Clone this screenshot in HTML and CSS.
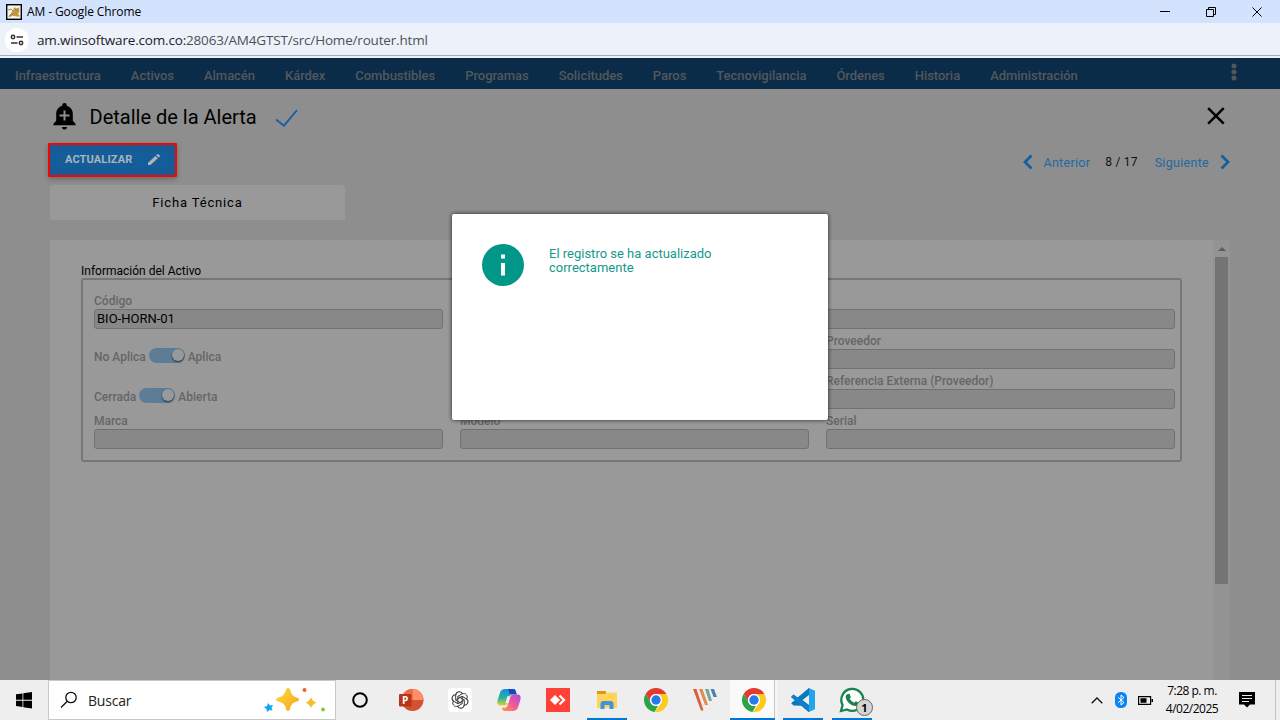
FILE: index.html
```html
<!DOCTYPE html>
<html lang="es">
<head>
<meta charset="utf-8">
<title>AM - Google Chrome</title>
<link rel="stylesheet" href="styles.css">
</head>
<body>
<header class="titlebar">
  <svg class="favicon" width="16" height="16" viewBox="0 0 16 16"><rect x=".7" y=".7" width="14.6" height="14.6" fill="#f4f4f0" stroke="#000" stroke-width="1.4"/><path d="M2 13l2.500-2.500L7 6l1.500-3 1.500 1.500L13 3.500l.5 4-1.500 2 2 3h-4l-2-1.500-3 1.500z" fill="#c9963c"/><path d="M2 6l3-1 2 2M3 12l3-2 3 2M9 5l3 1" fill="none" stroke="#8d8068" stroke-width=".9"/></svg>
  <span class="window-title">AM - Google Chrome</span>
  <svg class="window-controls" width="104" height="16" viewBox="0 0 104 16" fill="none" stroke="#000" stroke-width="1"><path d="M0 7.500h10M46.500 5.500h7v7h-7zM48.500 5.500v-2h7v7h-2M92.500 3.500l9 9M101.500 3.500l-9 9"/></svg>
</header>
<div class="urlbar">
  <span class="site-info"><svg width="24" height="24" viewBox="0 0 24 24" fill="none" stroke="#333" stroke-width="1.5"><circle cx="8" cy="9" r="1.700"/><path d="M11.500 9h6.500M6 15h6.500"/><circle cx="16" cy="15" r="1.700"/></svg></span>
  <span class="url">am.winsoftware.com.co:<span class="url-path">28063/AM4GTST/src/Home/router.html</span></span>
</div>
<nav class="menu">
  <span>Infraestructura</span><span>Activos</span><span>Almacén</span><span>Kárdex</span><span>Combustibles</span><span>Programas</span><span>Solicitudes</span><span>Paros</span><span>Tecnovigilancia</span><span>Órdenes</span><span>Historia</span><span>Administración</span>
  <svg class="more" width="6" height="18" viewBox="0 0 6 18" fill="#53585c"><circle cx="3" cy="3" r="2.500"/><circle cx="3" cy="9" r="2.500"/><circle cx="3" cy="15" r="2.500"/></svg>
</nav>
<main class="page">
  <div class="heading">
    <svg class="bell" width="23" height="27" viewBox="0 0 23 27"><path d="M11.500 0c1.300 0 2.200.9 2.200 2v.8c3.700 1 6.100 4.100 6.100 8v7l2.700 2.900v1.500H.5v-1.500l2.700-2.900v-7c0-3.900 2.400-7 6.100-8V2c0-1.100.9-2 2.200-2zM9 23.900h5c0 1.500-1 2.600-2.500 2.600S9 25.400 9 23.900z" fill="#000"/><path d="M11.500 7.500v10M6.500 12.500h10" stroke="#8e8e8e" stroke-width="2"/></svg>
    <h1>Detalle de la Alerta</h1>
    <svg class="check" width="23" height="18" viewBox="0 0 23 18"><path d="M1 10.500l8 6.200L22 1.200" fill="none" stroke="#16609f" stroke-width="1.800"/></svg>
    <svg class="close" width="18" height="18" viewBox="0 0 18 18"><path d="M1.200 1.200l15.500 15.500M16.700 1.200L1.200 16.700" stroke="#000" stroke-width="2.500"/></svg>
  </div>
  <div class="actions">
    <button class="update">ACTUALIZAR<svg width="12" height="11" viewBox="3 3 18 18" preserveAspectRatio="none" fill="#a9b4bf"><path d="M3 17.250V21h3.750L17.810 9.940l-3.750-3.750L3 17.250zM20.710 7.040a1 1 0 0 0 0-1.410l-2.340-2.340a1 1 0 0 0-1.410 0l-1.830 1.830 3.750 3.750 1.830-1.830z"/></svg></button>
    <div class="pager">
      <svg width="10" height="16" viewBox="0 0 10 16"><path d="M8.500 1.500L2 8l6.500 6.500" fill="none" stroke="#155f9f" stroke-width="2.800"/></svg>
      <span class="prev">Anterior</span><span class="count">8 / 17</span><span class="next">Siguiente</span>
      <svg width="10" height="16" viewBox="0 0 10 16"><path d="M1.500 1.500L8 8l-6.500 6.500" fill="none" stroke="#155f9f" stroke-width="2.800"/></svg>
    </div>
  </div>
  <div class="tab">Ficha Técnica</div>
  <div class="sheet">
    <section class="content">
      <h2>Información del Activo</h2>
      <div class="fields">
        <div class="column">
          <div class="field"><label>Código</label><div class="input">BIO-HORN-01</div></div>
          <div class="toggle"><span>No Aplica</span><i class="switch"></i><span>Aplica</span></div>
          <div class="toggle"><span>Cerrada</span><i class="switch"></i><span>Abierta</span></div>
          <div class="field"><label>Marca</label><div class="input"></div></div>
        </div>
        <div class="column column-end">
          <div class="field"><label>Modelo</label><div class="input"></div></div>
        </div>
        <div class="column">
          <div class="field"><label></label><div class="input"></div></div>
          <div class="field"><label>Proveedor</label><div class="input"></div></div>
          <div class="field"><label>Referencia Externa (Proveedor)</label><div class="input"></div></div>
          <div class="field"><label>Serial</label><div class="input"></div></div>
        </div>
      </div>
    </section>
    <div class="scrollbar"><i class="scroll-arrow"></i><i class="scroll-thumb"></i></div>
  </div>
</main>
<div class="modal">
  <svg width="42" height="42" viewBox="0 0 42 42"><circle cx="21" cy="21" r="21" fill="#009688"/><path d="M19 10.500h4v4h-4zM19 19h4v12.500h-4z" fill="#fff"/></svg>
  <p>El registro se ha actualizado correctamente</p>
</div>
<footer class="taskbar">
  <div class="start"><svg width="16" height="17" viewBox="0 0 16 17"><path d="M0 2.300L6.500 1.400v6.300H0zM7.300 1.300L16 0v7.700H7.300zM0 8.700h6.500V15L0 14.100zM7.300 8.700H16v7.800L7.300 15.200z"/></svg></div>
  <div class="search">
    <svg width="18" height="18" viewBox="0 0 18 18" fill="none" stroke="#111" stroke-width="1.300"><circle cx="11" cy="6.500" r="5.200"/><path d="M7.300 10.200L1 16.500"/></svg>
    <span>Buscar</span>
    <svg class="sparkles" width="64" height="28" viewBox="0 0 64 28"><defs><linearGradient id="gold" x2="1" y2="1"><stop stop-color="#ffd83d"/><stop offset="1" stop-color="#f2a91d"/></linearGradient></defs><path d="M25 2q2 0 2.500 3 1.200 5 5 6t3.500 2.500q0 1.500-3.500 2.500t-5 5q-.7 4-2.500 4t-2.500-4q-1.500-4-5.500-5t-4-2.500 4-2.500 5.500-6Q23 2 25 2z" fill="url(#gold)"/><path d="M48 11q1.500 4.500 5.500 5.500-4 1.500-5.500 5.500-1.500-4-5.500-5.500 4-1 5.500-5.500z" fill="#f9bd28"/><path d="M5 17l2 2.500 3-.5-1.500 3 1 2.500-3-.5L4 26l-.5-3L1 21l3-1z" fill="#10a5f5"/><circle cx="41.500" cy="4" r="2" fill="#f4602c"/><circle cx="60" cy="23.500" r="2" fill="#8cc647"/></svg>
  </div>
  <div class="apps">
    <div class="app cortana"><svg width="24" height="24" viewBox="0 0 24 24"><circle cx="12" cy="12" r="6.800" fill="none" stroke="#000" stroke-width="2"/></svg></div>
    <div class="app"><svg width="26" height="24" viewBox="0 0 26 24"><circle cx="14.500" cy="12" r="11" fill="#d35230"/><path d="M14.500 1a11 11 0 0 1 11 11h-11z" fill="#ff8f6b"/><path d="M14.500 1v11h-11a11 11 0 0 1 11-11z" fill="#ed6c47"/><rect x="1" y="6" width="12.500" height="12.500" rx="1" fill="#b7351c"/><text x="4" y="16" class="ppt-letter">P</text></svg></div>
    <div class="app"><svg width="24" height="24" viewBox="0 0 24 24"><rect width="24" height="24" rx="4" fill="#fff"/><g fill="none" stroke="#303030" stroke-width=".95"><path id="knot" d="M9.800 15V8.300l4-2.300c4-2 7 2.500 4.500 5.300"/><use href="#knot" transform="rotate(60 12 12)"/><use href="#knot" transform="rotate(120 12 12)"/><use href="#knot" transform="rotate(180 12 12)"/><use href="#knot" transform="rotate(240 12 12)"/><use href="#knot" transform="rotate(300 12 12)"/></g></svg></div>
    <div class="app"><svg width="24" height="24" viewBox="1 1 22 22"><defs><linearGradient id="cpa" x1="0" y1="0" x2="0" y2="1"><stop stop-color="#178ddd"/><stop offset=".55" stop-color="#27b69c"/><stop offset="1" stop-color="#e8cf2b"/></linearGradient><linearGradient id="cpb" x1="1" y1="0" x2="0" y2="1"><stop stop-color="#a54de4"/><stop offset=".5" stop-color="#f05a94"/><stop offset="1" stop-color="#ff9b48"/></linearGradient></defs><path d="M8 2h8c1.500 0 2 1 2.500 3h-3c-1.500 0-2 1-2.500 3l-2 6.500c-.8 2-1.500 2.500-3.500 2.500H4c-3 0-3-3-2.300-5.500l2-6C4.500 3 6 2 8 2z" fill="url(#cpa)"/><path d="M11 2h5c1.500 0 2 1 2.500 3l.8 2H13c-1-1-1-4-2-5z" fill="#1647bc"/><path d="M16 22H8c-1.500 0-2-1-2.500-3h3c1.500 0 2-1 2.500-3l2-6.500C13.800 7.500 14.500 7 16.500 7H20c3 0 3 3 2.300 5.500l-2 6C19.500 21 18 22 16 22z" fill="url(#cpb)"/><path d="M13.300 8.500h-2.800L8.700 15h2.700z" fill="#eee"/></svg></div>
    <div class="app"><svg width="24" height="24" viewBox="0 0 24 24"><path fill="#ff4137" d="M0 0h24v24H0z"/><path fill="#fff" d="M9 7l5 5-5 5-5-5z"/><path d="M13.500 7.500L18 12l-4.500 4.500" fill="none" stroke="#fff" stroke-width="2.200"/></svg></div>
    <div class="app running"><svg width="22" height="20" viewBox="0 0 22 20"><path d="M1 1h9v4H1z" fill="#dc9a0d"/><path d="M1 4h8l1.500-1.500H21V18H1z" fill="#ffd35c"/><path d="M4.500 19v-5q0-3 3-3h7q3 0 3 3v5h-4v-4h-5v4z" fill="#3d93dc"/></svg></div>
    <div class="app"><svg width="24" height="24" viewBox="0 0 24 24"><g id="chrome"><path d="M1.600 6A12 12 0 0 1 22.400 6H12a6 6 0 0 0-5.200 9z" fill="#e43b2e"/><path d="M1.600 6l5.200 9A6 6 0 0 0 12 18l2-.3L10.500 23.900A12 12 0 0 1 1.600 6z" fill="#27a549"/><path d="M22.400 6A12 12 0 0 1 11 24l6.200-9A6 6 0 0 0 12 6z" fill="#fdcb1d"/><circle cx="12" cy="12" r="6" fill="#fff"/><circle cx="12" cy="12" r="4.700" fill="#2979ed"/></g></svg></div>
    <div class="app"><svg width="24" height="24" viewBox="0 0 24 24"><path d="M0 1h3.500l7 21.500H8z" fill="#dc5c3f"/><path d="M6 1h3.500l5.500 16h-3z" fill="#e88a4c"/><path d="M12 1h3.500l3.500 12h-3z" fill="#72a896"/><path d="M17.500 1H21l3 8h-3.500z" fill="#4c80b6"/></svg></div>
    <div class="app running active"><svg width="24" height="24" viewBox="0 0 24 24"><use href="#chrome"/></svg></div>
    <div class="app running"><svg width="24" height="24" viewBox="0 0 24 24"><path d="M17.500 0L24 3v18l-6.500 3L0 9l2.500-2.500L18 18V6z" fill="#2489ca"/><path d="M17.500 0L24 3v18l-6.500 3z" fill="#23a5ec"/><path d="M18 6v12L2.500 17.500 0 15 18 0z" fill="#0879bd"/><path d="M18 7v10l-6.500-5z" fill="#eee"/><path d="M0 9l2.500-2.500L18 18v6z" fill="#1081c8"/><path d="M0 10.500l3.500 1.800L0 15z" fill="#eee"/><path d="M4.500 17l7-4 4 4-7 2z" fill="none"/></svg></div>
    <div class="app running whatsapp"><svg width="26" height="26" viewBox="0 0 26 26"><path d="M2 24l1.600-6A11 11 0 1 1 8 22.500z" fill="#fff" stroke="#168450" stroke-width="2.300"/><path d="M8.500 7l2-.3 1.400 3.500-1.200 1.500q1.500 3 4.500 4l1.500-1.500 3 1.500c.2 2.500-2 3.500-4 3.200-5-.8-9.500-6-9-9.500q.2-1.500 1.800-2.400z" fill="#168450"/></svg><b class="badge">1</b></div>
  </div>
  <div class="tray">
    <svg width="12" height="7" viewBox="0 0 12 7"><path d="M.7 6.300L6 1l5.300 5.300" fill="none" stroke="#111" stroke-width="1.300"/></svg>
    <svg class="bluetooth" width="12" height="16" viewBox="0 0 12 16"><rect width="12" height="16" rx="5.500" fill="#0a84f5"/><path d="M3 5.300l6 5.200-3 2.500V3l3 2.500-6 5.200" fill="none" stroke="#fff"/></svg>
    <svg class="battery" width="15" height="9" viewBox="0 0 15 9"><path d="M.6.600h12v7.800H.6z" fill="none" stroke="#000" stroke-width="1.200"/><path d="M2.500 2.300h6v4.400h-6zM13.500 3H15v3h-1.500z"/></svg>
    <div class="clock"><span class="time">7:28 p. m.</span><span class="date">4/02/2025</span></div>
    <svg class="notice" width="16" height="16" viewBox="0 0 16 16"><path d="M0 0h16v12.500h-5L8 15.500l-3-3H0z"/><path d="M3 3.500h10M3 6.500h10M3 9.500h7" stroke="#eee"/></svg>
    <i class="desktop-edge"></i>
  </div>
</footer>
</body>
</html>
```
FILE: styles.css
```css
* { box-sizing: border-box; }
body { margin: 0; width: 1280px; height: 720px; overflow: hidden; display: flex; flex-direction: column; position: relative; background: #8e8e8e; font-family: Roboto, sans-serif; color: #000; }
svg { display: block; flex: none; }
.titlebar { height: 23px; flex: none; display: flex; align-items: center; padding-left: 6px; background: #d3e3fd; }
.window-title { margin-left: 5px; font: 12px/16px "Open Sans", sans-serif; letter-spacing: -.1px; }
.window-controls { margin-left: auto; margin-right: 16px; }
.urlbar { height: 35px; flex: none; display: flex; align-items: center; padding: 0 0 1px 5px; background: linear-gradient(#edf1fa 32px, #a6abb0 32px 33px, #eef2f8 33px); }
.site-info { width: 24px; height: 24px; border-radius: 50%; background: #fff; }
.url { margin-left: 8px; font: 13.500px/20px "Open Sans", sans-serif; letter-spacing: -.18px; white-space: nowrap; color: #202124; }
.url-path { color: #4d5156; }
.menu { height: 31px; flex: none; display: flex; gap: 30px; padding: 3px 43px 0 15px; background: #0a2c49; color: #53585c; font-size: 13px; line-height: 29px; font-weight: 500; letter-spacing: -.04px; }
.more { margin: 2px 0 0 auto; }
.page { height: 591px; flex: none; padding: 0 50px; }
.heading { height: 54px; display: flex; padding-top: 14px; }
.bell { margin-left: 3px; }
h1 { margin: 0 0 0 13.500px; font-size: 20px; line-height: 28px; font-weight: 400; letter-spacing: 0; }
.check { margin: 6px 0 0 18px; }
.close { margin: 4px 5px 0 auto; }
.actions { height: 42px; display: flex; justify-content: space-between; align-items: flex-start; }
.update { width: 129px; height: 34px; margin-left: -2px; padding: 0 15px 1px; display: flex; align-items: center; justify-content: space-between; border: 2px solid #f00; border-radius: 1px; background: #155d98; color: #a9b4bf; font: 700 11px/14px Roboto, sans-serif; letter-spacing: .13px; box-shadow: 0 2px 5px #0004; }
.pager { display: flex; align-items: center; margin-top: 11px; height: 16px; color: #2168a3; font-size: 12.500px; letter-spacing: .3px; }
.prev { margin-left: 10px; }
.count { margin: -1px 17px 0 15px; color: #111; font-size: 12px; letter-spacing: .2px; }
.next { margin-right: 11px; }
.tab { width: 295px; height: 35px; border-radius: 3px 3px 0 0; background: #999; text-align: center; font-size: 13px; line-height: 35px; letter-spacing: .84px; }
.sheet { height: 440px; margin-top: 20px; display: flex; }
.content { width: 1163px; padding: 23px 31px 0; background: #999; }
h2 { margin: 0; height: 15px; font-size: 12px; line-height: 16px; font-weight: 400; }
.fields { width: 1101px; height: 184px; padding: 9px 5px 9px 11px; border: 2px solid #757776; border-radius: 3px; display: flex; gap: 17px; }
.column { width: 349px; display: flex; flex-direction: column; }
.column-end { justify-content: flex-end; padding-bottom: 2px; }
.field { height: 40px; }
label { display: block; height: 20px; font-size: 12px; line-height: 24px; font-weight: 500; color: #666; white-space: nowrap; }
.input { height: 20px; padding-left: 2px; border: 1px solid #707271; border-radius: 3px; background: #888; font-size: 13px; line-height: 18px; }
.toggle { height: 40px; display: flex; align-items: flex-start; padding-top: 19px; gap: 3px; font-size: 12px; line-height: 19px; font-weight: 500; color: #666; }
.switch { width: 36px; height: 15px; border-radius: 8px; background: #5b7d98; display: flex; justify-content: flex-end; align-items: center; }
.switch::after { content: ""; width: 12px; height: 12px; margin: 0 1px 1px 0; border-radius: 50%; background: #999; box-shadow: 0 1px 2px #234; }
.scrollbar { width: 17px; background: #939393; display: flex; flex-direction: column; align-items: center; padding-top: 7px; }
.scroll-arrow { border: 4px solid transparent; border-top: 0; border-bottom-color: #5d5d5d; }
.scroll-thumb { width: 13px; height: 327px; margin-top: 6px; background: #747474; margin-right: 1px; }
.modal { position: absolute; left: 452px; top: 214px; width: 376px; height: 206px; padding: 30px; display: flex; gap: 25px; border-radius: 2px; background: #fff; box-shadow: 0 0 4px #000b; color: #16998c; }
.modal p { width: 200px; margin: 3px 0 0; font-size: 13px; line-height: 14px; }
.taskbar { height: 40px; flex: none; display: flex; background: #eee; font-family: "Open Sans", sans-serif; }
.start { width: 48px; padding: 12px 0 0 16px; }
.search { width: 288px; display: flex; align-items: center; padding: 0 8px 0 11px; border: 1px solid #c8c8c8; background: #fff; font-size: 14px; letter-spacing: -.2px; color: #222; }
.search span { margin-left: 10px; }
.sparkles { margin-left: auto; }
.apps { display: flex; gap: 9px; padding-left: 4px; }
.app { width: 40px; display: flex; align-items: center; justify-content: center; border-bottom: 2px solid transparent; padding-top: 2px; }
.cortana { margin-right: 2px; }
.running { border-color: #0078d4; }
.active { width: 45px; margin: 0 -1px 0 -4px; background: #fafafa; box-shadow: inset -1px 0 #c8c8c8, 3px 0 #f4f4f4; padding-right: 0; padding-left: 2px; }
.whatsapp { position: relative; }
.badge { position: absolute; left: 24px; top: 19px; width: 17px; height: 17px; border: 1px solid #666; border-radius: 50%; background: #d4d4d4; text-align: center; font-size: 11px; line-height: 15px; }
.ppt-letter { fill: #fff; font: bold 10px "Open Sans", sans-serif; }
.tray { margin-left: auto; display: flex; align-items: center; }
.bluetooth { margin-left: 12px; }
.battery { margin-left: 11px; }
.clock { width: 60px; margin-left: 9px; display: flex; flex-direction: column; align-items: center; font-size: 12px; line-height: 18px; letter-spacing: -.5px; white-space: nowrap; }
.notice { margin-left: 17px; }
.desktop-edge { width: 5px; height: 40px; margin-left: 20px; border-left: 1px solid #c5c5c5; }
```
